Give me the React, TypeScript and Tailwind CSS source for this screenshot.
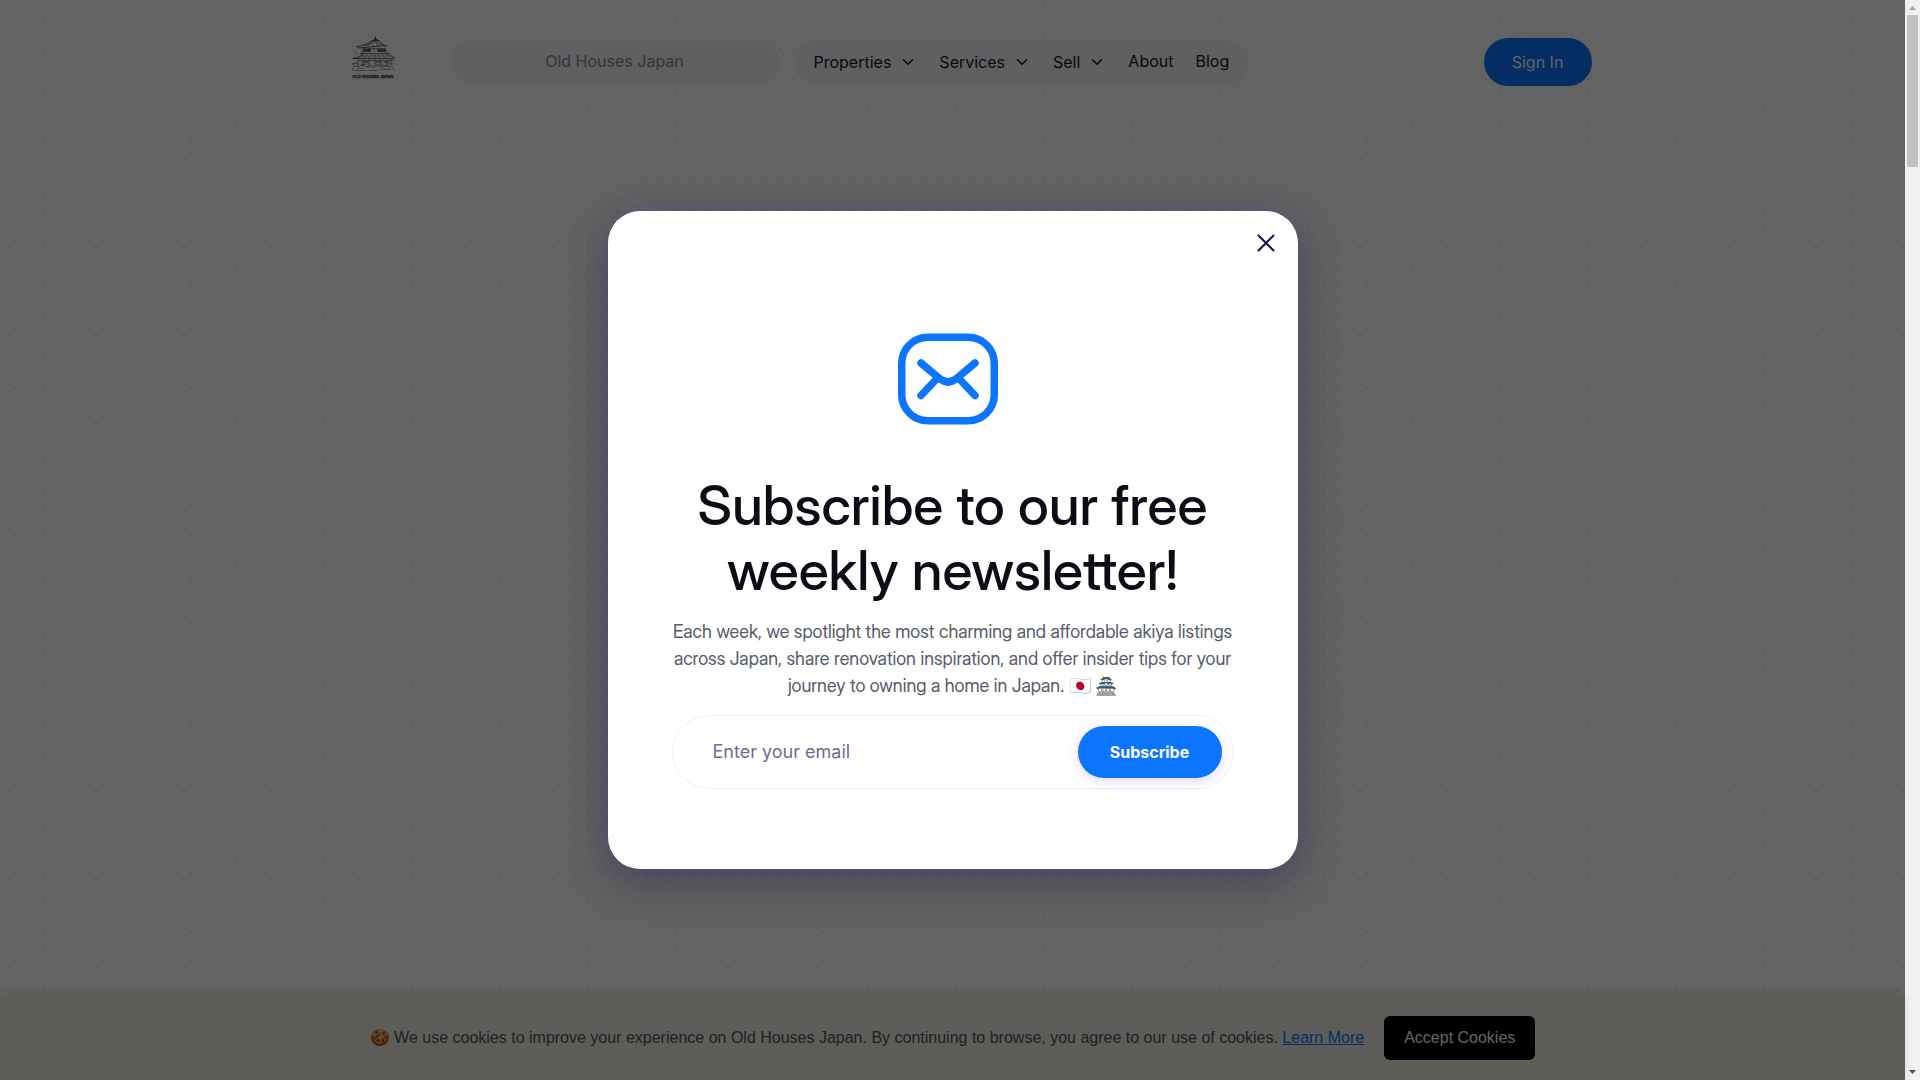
import { ChevronDown } from 'lucide-react';

interface NavItem {
  label: string;
  hasMenu: boolean;
}

const navItems: NavItem[] = [
  { label: 'Properties', hasMenu: true },
  { label: 'Services', hasMenu: true },
  { label: 'Sell', hasMenu: true },
  { label: 'About', hasMenu: false },
  { label: 'Blog', hasMenu: false },
];

function DotBackground() {
  return (
    <svg className="absolute inset-0 w-full h-full" aria-hidden="true">
      <defs>
        <pattern id="dots" x="-7" y="-2" width="14.7" height="14.7" patternUnits="userSpaceOnUse">
          <circle cx="7.3" cy="7.5" r="0.6" fill="#a8a8a8" />
        </pattern>
      </defs>
      <rect width="100%" height="100%" fill="url(#dots)" />
    </svg>
  );
}

function Logo() {
  return (
    <svg viewBox="0 0 44 44" className="w-11 h-11" fill="none" stroke="#4a4a4a" strokeLinecap="round" strokeLinejoin="round" role="img" aria-label="Old Houses Japan">
      {/* upper roof */}
      <path d="M24.5 1v4M23 3.5h3" strokeWidth="1.2" />
      <path d="M6 10.5c6-1 12-3 15-6h7c2 3 4 4.500 8 5.500M6 10.500l1.500 1.500L34 9.500" strokeWidth="0.9" />
      <path d="M12 10l9-4.500M16 10l6-4.500M21 10l3-5M26 10l-1-5M30 9.500l-3-5M14 10.500l9-5M28 9.500l-3-5" strokeWidth="0.5" />
      {/* upper storey */}
      <path d="M12 12v4.500M34 11v5.500M18 12v4M23 12v4M28 11.500v4.500M13 12.500h21" strokeWidth="0.6" />
      <path d="M13 14.500h6M27 14.500h7" strokeWidth="2.4" />
      <path d="M10 17.500h27M11 16l-1 2M36 16l2 2" strokeWidth="0.7" />
      {/* lower roof */}
      <path d="M2 22.500c4-.5 8-2 10-5M38 17.500c1 2 3 3.500 6 4.500M2 22.500h41" strokeWidth="0.8" />
      <path d="M8 22l5-4M13 22l4-4M18 22l3-4M24 22v-4M29 22l-2-4M34 22l-3-4M39 22l-4-4M10 20h29" strokeWidth="0.5" />
      {/* lower storey */}
      <path d="M7 23v7M12 24v6M18 24v5M24 24v4M30 24v5M36 24v5M40 23v6M8 24.500h32" strokeWidth="0.6" />
      <path d="M12 26h5M25 26h5M33 26h4" strokeWidth="1.2" />
      {/* garden and stones */}
      <path d="M1 34c1-4 4-5 7-3 2-3 5-3 7 0 3-2 5-1 7 1 3-3 6-3 8 0 3-3 6-3 8-1 2-1 4 0 5 3" strokeWidth="0.6" />
      <path d="M3 34.500h12M6 32.500h6M18 34.500h8M29 33.500h11M21 30.500l5-2 6 1M37 27l5 1M1 28l5-1M4 16c2 0 3 2 1 3M2 30c1-3 4-4 5-2M10 29l5-1M33 31l5-2M39 25l4-1M16 32l4-3" strokeWidth="0.5" />
      <text x="22" y="42" textAnchor="middle" fontFamily="Liberation Sans, sans-serif" fontSize="4" fontWeight="700" fill="#4a4a4a" stroke="#4a4a4a" strokeWidth="0.3">
        OLD HOUSES JAPAN
      </text>
    </svg>
  );
}

function Header() {
  return (
    <header className="relative w-full max-w-[1278px] mx-auto h-[124px] flex items-center">
      <a href="#home" className="ml-[37px] mt-[-8px]">
        <Logo />
      </a>
      <div className="ml-14 w-[328px] h-[42px] pb-0.5 rounded-full bg-[#f3f6fb] flex items-center justify-center text-base text-[#888b91]">
        Old Houses Japan
      </div>
      <nav className="ml-[15px] h-11 px-5 rounded-full bg-[#f3f6fb] flex items-center gap-[22px] text-base text-[#17181c]">
        {navItems.map((item) =>
          item.hasMenu ? (
            <button key={item.label} type="button" className="flex items-center gap-2">
              {item.label}
              <ChevronDown className="w-[18px] h-[18px]" />
            </button>
          ) : (
            <a key={item.label} href={`#${item.label.toLowerCase()}`} className="pb-0.5">
              {item.label}
            </a>
          )
        )}
      </nav>
      <button type="button" className="ml-auto w-[108px] h-12 rounded-full bg-[#0b75fe] text-base text-white">
        Sign In
      </button>
    </header>
  );
}

function CookieBanner() {
  return (
    <div className="relative mt-auto flex items-center justify-center gap-5 p-5 bg-[#f2efe8] shadow-[0_-2px_10px_rgba(0,0,0,0.1)] font-['Liberation_Sans',Arial,sans-serif] text-base text-[#51545f]">
      <p>
        🍪 We use cookies to improve your experience on Old Houses Japan. By continuing to browse, you agree to our use of cookies.{' '}
        <a href="#cookies" className="text-[#0b75fe] underline">
          Learn More
        </a>
      </p>
      <button type="button" className="h-11 px-5 rounded-md bg-black text-white">
        Accept Cookies
      </button>
    </div>
  );
}

function MailIcon() {
  return (
    <svg viewBox="0 0 100 92" className="w-[100px] h-[92px]" fill="none" stroke="#0b75fe" strokeWidth="7.5" strokeLinecap="round" aria-hidden="true">
      <rect x="3.75" y="4.25" width="92.5" height="83.5" rx="26" />
      <path d="M23 30l18 15q9 8 18 0L77 30M23 62.500l16-17M77 62.500l-16-17" />
    </svg>
  );
}

function NewsletterModal() {
  return (
    <div className="absolute inset-0 flex items-center justify-center bg-black/61">
      <div
        role="dialog"
        aria-labelledby="newsletter-title"
        className="relative w-[690px] px-16 pt-[122px] pb-20 rounded-[32px] bg-white text-center shadow-[0_14px_42px_rgba(8,15,52,0.3),0_0_24px_rgba(74,58,255,0.12)]"
      >
        <button type="button" aria-label="Close" className="absolute top-5 right-5 w-6 h-6">
          <svg viewBox="0 0 24 24" className="w-6 h-6" fill="none" stroke="#170f49" strokeWidth="2" strokeLinecap="round">
            <path d="M4.500 4.500l15 15M19.500 4.500l-15 15" />
          </svg>
        </button>
        <div className="flex justify-center pr-[10px]">
          <MailIcon />
        </div>
        <h2 id="newsletter-title" className="mt-12 font-['Inter_Display','Inter',sans-serif] text-[55px] leading-[65px] font-medium text-[#0b0d14]">
          Subscribe to our free weekly newsletter!
        </h2>
        <p className="mt-[15px] font-['Inter_Display','Inter',sans-serif] text-lg leading-[27px] text-[#565b6b]">
          Each week, we spotlight the most charming and affordable akiya listings across Japan, share renovation inspiration, and offer insider tips for your journey to owning a home in Japan. 🇯🇵 🏯
        </p>
        <form className="mt-4 h-[74px] pl-10 pr-[11px] flex items-center border border-[#eff0f6] rounded-full">
          <input
            type="email"
            aria-label="Email address"
            placeholder="Enter your email"
            className="flex-1 min-w-0 text-lg text-[#170f49] placeholder:text-[#6f6c90] outline-none"
          />
          <button type="button" className="w-36 h-[52px] rounded-full bg-[#0b75fe] text-base font-bold text-white shadow-[0_3px_12px_rgba(74,58,255,0.18)]">
            Subscribe
          </button>
        </form>
      </div>
    </div>
  );
}

function ScrollBar() {
  return (
    <div className="w-[15px] h-full px-[2px] flex flex-col items-center bg-[#f1f1f1]" aria-hidden="true">
      <svg viewBox="0 0 11 15" className="w-[11px] h-[15px]">
        <path d="M5.500 6L9 10H2z" fill="#a3a3a3" />
      </svg>
      <div className="w-full h-[152px] bg-[#c1c1c1]" />
      <svg viewBox="0 0 11 15" className="mt-auto w-[11px] h-[15px]">
        <path d="M5.500 9L9 5H2z" fill="#505050" />
      </svg>
    </div>
  );
}

export default function App() {
  return (
    <div className="flex h-screen overflow-hidden bg-white font-['Inter',sans-serif]">
      <main className="relative flex-1 flex flex-col">
        <DotBackground />
        <Header />
        <CookieBanner />
        <NewsletterModal />
      </main>
      <ScrollBar />
    </div>
  );
}
